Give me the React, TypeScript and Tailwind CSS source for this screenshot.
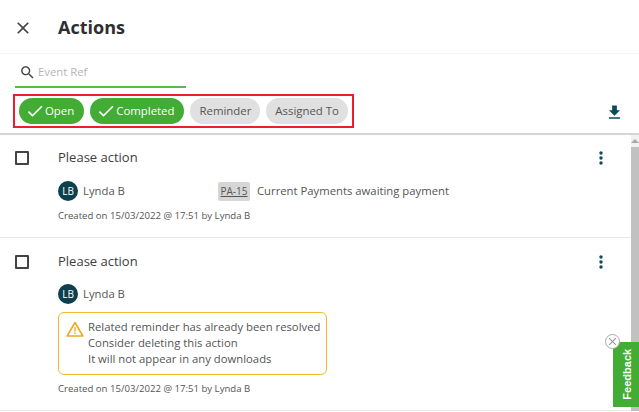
function MuiIcon({ d, size, className }: { d: string; size: number; className?: string }) {
  return (
    <svg width={size} height={size} viewBox="0 0 24 24" fill="currentColor" className={className}>
      <path d={d} />
    </svg>
  );
}

const closePath = "M19 6.41 17.59 5 12 10.59 6.41 5 5 6.41 10.59 12 5 17.59 6.41 19 12 13.41 17.59 19 19 17.59 13.41 12z";
const searchPath =
  "M15.5 14h-.79l-.28-.27C15.41 12.59 16 11.11 16 9.5 16 5.91 13.09 3 9.5 3S3 5.91 3 9.5 5.91 16 9.5 16c1.61 0 3.09-.59 4.23-1.57l.27.28v.79l5 4.99L20.49 19l-4.99-5zm-6 0C7.01 14 5 11.99 5 9.5S7.01 5 9.5 5 14 7.01 14 9.5 11.99 14 9.5 14z";
const checkPath = "M9 16.17 4.83 12l-1.42 1.41L9 19 21 7l-1.41-1.41z";
const downloadPath = "M19 9h-4V3H9v6H5l7 7 7-7zM5 18v2h14v-2H5z";

function Chip({ label, active }: { label: string; active?: boolean }) {
  if (active) {
    return (
      <div className="flex h-[26px] items-center rounded-full bg-[#43ac34] pl-[6px] pr-[10px] text-[11.4px] text-white">
        <MuiIcon d={checkPath} size={20} />
        <span>{label}</span>
      </div>
    );
  }
  return (
    <div className="flex h-[26px] items-center rounded-full bg-[#e0e0e0] px-[9px] text-[11.4px] text-[#555]">
      {label}
    </div>
  );
}

function Avatar() {
  return (
    <div className="flex h-5 w-5 items-center justify-center rounded-full bg-[#0d3f4f] text-[10px] text-white">
      LB
    </div>
  );
}

function Dots() {
  return (
    <svg width="4" height="14" viewBox="0 0 4 14" className="mt-[2px] shrink-0">
      <circle cx="2" cy="2" r="1.7" fill="#0d4a5c" />
      <circle cx="2" cy="7" r="1.7" fill="#0d4a5c" />
      <circle cx="2" cy="12" r="1.7" fill="#0d4a5c" />
    </svg>
  );
}

function Row({ children, size }: { children: React.ReactNode; size: string }) {
  return (
    <div className={`flex border-b border-[#e8e8e8] pl-[15px] pr-[28px] ${size}`}>
      <div className="mt-[2px] h-[14px] w-[14px] shrink-0 rounded-[1px] border-2 border-[#444]" />
      <div className="ml-[29px] flex-1">
        <div className="text-[13px] leading-[16px] text-[#3d3d3d]">Please action</div>
        {children}
      </div>
      <Dots />
    </div>
  );
}

export default function App() {
  return (
    <div className="relative h-[412px] w-[639px] overflow-hidden bg-white font-['Open_Sans',sans-serif]">
      {/* Header */}
      <div className="flex h-[54px] items-center border-b border-[#f4f4f4] pl-[13px] pt-[2px]">
        <MuiIcon d={closePath} size={20} className="text-[#444]" />
        <div className="ml-[25px] text-[18px] font-bold text-[#2f2f2f]">Actions</div>
      </div>

      {/* Search */}
      <div className="ml-[15px] flex h-[34px] w-[171px] items-center border-b-2 border-[#5bb84d] pl-[4px] pt-[4px]">
        <MuiIcon d={searchPath} size={17} className="text-[#444]" />
        <span className="ml-[2px] text-[11.3px] text-[#b5b5b5]">Event Ref</span>
      </div>

      {/* Filters */}
      <div className="flex h-[47px] items-center justify-between border-b-2 border-[#d4d4d4] pl-[13px] pr-[15px] pt-[1px]">
        <div className="flex h-[34px] items-center gap-[6px] border-2 border-[#ed1c2e] pl-[4px] pr-[4px]">
          <Chip label="Open" active />
          <Chip label="Completed" active />
          <Chip label="Reminder" />
          <Chip label="Assigned To" />
        </div>
        <MuiIcon d={downloadPath} size={19} className="mt-[3px] text-[#0d4a5c]" />
      </div>

      <div className="flex">
        {/* List */}
        <div className="w-[631px]">
          <Row size="h-[103px] pt-[14px]">
            <div className="mt-[16px] flex h-5 items-center text-[11.3px] text-[#555]">
              <Avatar />
              <span className="ml-[5px] w-[135px]">Lynda B</span>
              <span className="flex h-[19px] w-[32px] items-center justify-center rounded-[2px] bg-[#d6d6d6] text-[10px] underline">PA-15</span>
              <span className="ml-[7px]">Current Payments awaiting payment</span>
            </div>
            <div className="mt-[8px] text-[9.6px] leading-[14px] text-[#555]">Created on 15/03/2022 @ 17:51 by Lynda B</div>
          </Row>
          <Row size="h-[173px] pt-[15px]">
            <div className="mt-[15px] flex h-5 items-center text-[11.3px] text-[#555]">
              <Avatar />
              <span className="ml-[5px]">Lynda B</span>
            </div>
            <div className="mt-[8px] flex h-[63px] w-[269px] rounded-[6px] border border-[#f0b92e] pl-[7px] pt-[6px]">
              <svg width="18" height="16" viewBox="0 0 18 16" className="mt-[2px] shrink-0">
                <path d="M9 1.5 1.2 15h15.6z" fill="none" stroke="#eeaa22" strokeWidth="1.6" strokeLinejoin="round" />
                <rect x="8.3" y="6" width="1.4" height="4.6" fill="#eeaa22" />
                <rect x="8.3" y="11.6" width="1.4" height="1.5" fill="#eeaa22" />
              </svg>
              <div className="ml-[4px] whitespace-nowrap text-[11.3px] leading-[16px] text-[#555]">
                <div>Related reminder has already been resolved</div>
                <div>Consider deleting this action</div>
                <div>It will not appear in any downloads</div>
              </div>
            </div>
            <div className="mt-[7px] text-[9.6px] leading-[14px] text-[#555]">Created on 15/03/2022 @ 17:51 by Lynda B</div>
          </Row>
        </div>

        {/* Scrollbar */}
        <div className="flex h-[276px] w-[8px] flex-col bg-[#f1f1f1]">
          <div className="flex h-[12px] items-center justify-center">
            <div className="h-0 w-0 border-x-[4px] border-b-[4px] border-x-transparent border-b-[#a8a8a8]" />
          </div>
          <div className="flex-1 bg-[#c1c1c1]" />
        </div>
      </div>

      {/* Feedback tab */}
      <div className="absolute left-[613px] top-[342px] flex h-[65px] w-[26px] items-center justify-center bg-[#43ac34] pl-[3px]">
        <span className="-rotate-90 whitespace-nowrap font-['Liberation_Sans',sans-serif] text-[11px] font-bold text-white">Feedback</span>
      </div>
      <div className="absolute left-[605px] top-[334px] flex h-[15px] w-[15px] items-center justify-center rounded-full border border-[#aaa] bg-white">
        <MuiIcon d={closePath} size={13} className="text-[#999]" />
      </div>
    </div>
  );
}
